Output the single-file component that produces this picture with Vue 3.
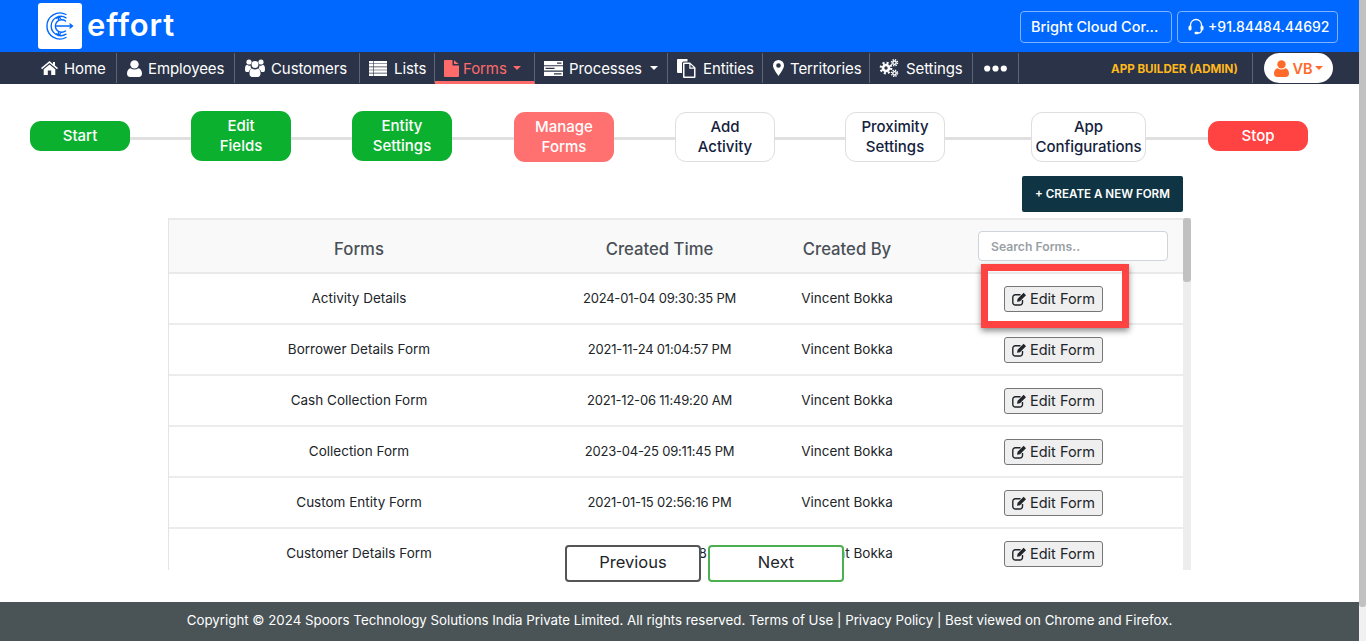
<script setup>
const navItems = [
  { label: 'Home', icon: 'home', width: 87, pad: 11, gap: 6 },
  { label: 'Employees', icon: 'user', width: 118, pad: 10, gap: 6 },
  { label: 'Customers', icon: 'users', width: 125, pad: 10, gap: 6 },
  { label: 'Lists', icon: 'list', width: 75, pad: 9, gap: 7 },
  { label: 'Forms', icon: 'file', width: 100, pad: 9, gap: 4, caret: true, active: true },
  { label: 'Processes', icon: 'server', width: 133, pad: 9, gap: 6, caret: true },
  { label: 'Entities', icon: 'files', width: 95, pad: 9, gap: 7 },
  { label: 'Territories', icon: 'marker', width: 107, pad: 10, gap: 6 },
  { label: 'Settings', icon: 'cogs', width: 103, pad: 9, gap: 7 },
  { label: '', icon: 'dots', width: 46, pad: 11, gap: 0 }
]

const steps = [
  { label: ['Start'], kind: 'green short', width: 100, gap: 61 },
  { label: ['Edit', 'Fields'], kind: 'green', width: 100, gap: 61 },
  { label: ['Entity', 'Settings'], kind: 'green', width: 100, gap: 62 },
  { label: ['Manage', 'Forms'], kind: 'coral low', width: 100, gap: 61 },
  { label: ['Add', 'Activity'], kind: 'plain low', width: 100, gap: 70 },
  { label: ['Proximity', 'Settings'], kind: 'plain low', width: 100, gap: 86 },
  { label: ['App', 'Configurations'], kind: 'plain low', width: 115, gap: 62 },
  { label: ['Stop'], kind: 'red short', width: 100, gap: 0 }
]

const rows = [
  ['Activity Details', '2024-01-04 09:30:35 PM', 'Vincent Bokka'],
  ['Borrower Details Form', '2021-11-24 01:04:57 PM', 'Vincent Bokka'],
  ['Cash Collection Form', '2021-12-06 11:49:20 AM', 'Vincent Bokka'],
  ['Collection Form', '2023-04-25 09:11:45 PM', 'Vincent Bokka'],
  ['Custom Entity Form', '2021-01-15 02:56:16 PM', 'Vincent Bokka'],
  ['Customer Details Form', '2021-11-18 10:22:08 AM', 'Vincent Bokka']
]
</script>

<template>
  <div class="page">
    <div class="main">
      <header class="top">
        <div class="brand">
          <div class="logo">
            <svg width="30" height="32" viewBox="0 0 30 32" fill="none" stroke="#0068ff" stroke-width="1.400" stroke-linecap="round">
              <path d="M21 4.500A13 13 0 1 0 21 27.500" />
              <path d="M21 7.800A9.700 9.700 0 1 0 21 24.200" />
              <path d="M20.500 11A6.300 6.300 0 1 0 20.500 21" />
              <path d="M11.500 16H27.500M25 14L27.500 16L25 18" />
              <path d="M13.500 6.800V10M11.500 8.300L13.500 6.500L15.500 8.300M13.500 25.200V22M11.500 23.700L13.500 25.500L15.500 23.700" />
            </svg>
          </div>
          <span class="wordmark">effort</span>
        </div>
        <div class="top-actions">
          <div class="outline-box company">Bright Cloud Cor...</div>
          <div class="outline-box phone">
            <svg width="16" height="17" viewBox="0 0 16 17" fill="none" stroke="#fff" stroke-width="1.300">
              <path d="M2.500 9V7a5.500 5.500 0 0 1 11 0V9" />
              <rect x="0.500" y="7.500" width="3" height="5" rx="1.500" fill="#fff" stroke="none" />
              <rect x="12.500" y="7.500" width="3" height="5" rx="1.500" fill="#fff" stroke="none" />
              <path d="M13.500 12c0 1.800-1.400 3-3.500 3" />
              <rect x="6.500" y="13.800" width="4" height="2.400" rx="1.200" fill="#fff" stroke="none" />
            </svg>
            <span>+91.84484.44692</span>
          </div>
        </div>
      </header>

      <nav class="nav">
        <div class="nav-items">
          <div
            v-for="item in navItems"
            :key="item.icon"
            class="nav-item"
            :class="{ active: item.active }"
            :style="{ width: item.width + 'px', paddingLeft: item.pad + 'px', gap: item.gap + 'px' }"
          >
            <svg v-if="item.icon === 'home'" class="ico" width="17" height="14" viewBox="0 0 17 14" fill="currentColor">
              <path d="M8.500 0L0 7l1 1.200L8.500 2l7.500 6.200L17 7l-3-2.500V1h-2v1.900z" />
              <path d="M8.500 3.400L2.700 8.200V14h4.100V9.600h3.400V14h4.100V8.200z" />
            </svg>
            <svg v-else-if="item.icon === 'user'" class="ico" width="15" height="17" viewBox="0 0 15 17" fill="currentColor">
              <circle cx="7.500" cy="4.400" r="4.200" />
              <path d="M0 13.500C0 10.600 1.500 8.600 3.600 8.200c2.300 1.600 5.500 1.600 7.800 0 2.100.4 3.600 2.400 3.600 5.300 0 2.200-1.300 3.500-3.200 3.500H3.200C1.300 17 0 15.700 0 13.500z" />
            </svg>
            <svg v-else-if="item.icon === 'users'" class="ico" width="20" height="18" viewBox="0 0 20 18" fill="currentColor">
              <circle cx="4" cy="3" r="2.600" />
              <circle cx="16" cy="3" r="2.600" />
              <circle cx="10" cy="5.500" r="3.400" />
              <path d="M0 10c0-2.500.8-4 2-4.200 1.200 1 2.700 1 3.600.6a5 5 0 0 0 .9 3.200A6 6 0 0 0 3.600 13H1.400C.5 13 0 12 0 10z" />
              <path d="M20 10c0-2.500-.8-4-2-4.200-1.200 1-2.700 1-3.600.6a5 5 0 0 1-.9 3.200A6 6 0 0 1 16.400 13h2.200C19.500 13 20 12 20 10z" />
              <path d="M4.500 14.500C4.500 11.500 5.500 10 7 9.600c1.800 1.200 4.200 1.200 6 0 1.500.4 2.500 1.900 2.500 4.900 0 2-1.100 3.500-2.700 3.500H7.200C5.600 18 4.500 16.500 4.500 14.500z" />
            </svg>
            <svg v-else-if="item.icon === 'list'" class="ico" width="18" height="15" viewBox="0 0 18 15" fill="currentColor">
              <path d="M0 0h18v2.500H0zM0 3.100h18v2.500H0zM0 6.200h18v2.500H0zM0 9.300h18v2.500H0zM0 12.400h18V15H0z" />
              <path d="M4.200 0h.6v15h-.6z" fill="#2a3347" />
            </svg>
            <svg v-else-if="item.icon === 'file'" class="ico" width="15" height="17" viewBox="0 0 15 17" fill="currentColor">
              <path d="M0 1a1 1 0 0 1 1-1h7.500v5.500H15V16a1 1 0 0 1-1 1H1a1 1 0 0 1-1-1zM10 .3L14.700 4H10z" />
            </svg>
            <svg v-else-if="item.icon === 'server'" class="ico" width="19" height="15" viewBox="0 0 19 15" fill="currentColor">
              <path fill-rule="evenodd" d="M0 0h19v4.300H0zM13 1.500v1.300h4.500V1.500zM0 5.300h19v4.300H0zM1.500 6.800v1.300h9V6.800zM0 10.700h19V15H0zM10 12.200v1.300h7.500v-1.300z" />
            </svg>
            <svg v-else-if="item.icon === 'files'" class="ico" width="19" height="19" viewBox="0 0 19 19" fill="currentColor">
              <path d="M0 1a1 1 0 0 1 1-1h9.500v2.500H6.700A1.700 1.700 0 0 0 5 4.200V14H1a1 1 0 0 1-1-1z" />
              <path fill-rule="evenodd" d="M6 4.500a1 1 0 0 1 1-1h6l5.500 5V18a1 1 0 0 1-1 1H7a1 1 0 0 1-1-1zM7.500 5v12.500h9.500V9.800h-4.700V5zM13.500 5.600v3h3.200z" />
            </svg>
            <svg v-else-if="item.icon === 'marker'" class="ico" width="11" height="16" viewBox="0 0 11 16" fill="currentColor">
              <path fill-rule="evenodd" d="M5.500 0A5.500 5.500 0 0 1 11 5.500C11 8.500 7.500 13 5.500 16 3.500 13 0 8.500 0 5.500A5.500 5.500 0 0 1 5.500 0zM5.500 3.200a2.300 2.300 0 1 0 0 4.600 2.300 2.300 0 0 0 0-4.600z" />
            </svg>
            <svg v-else-if="item.icon === 'cogs'" class="ico" width="20" height="18" viewBox="0 0 20 18" fill="none" stroke="currentColor">
              <circle cx="7" cy="9" r="3" stroke-width="2.600" />
              <circle cx="7" cy="9" r="5.200" stroke-width="2.400" stroke-dasharray="2 2.080" />
              <circle cx="15.500" cy="3.700" r="1.700" stroke-width="1.400" />
              <circle cx="15.500" cy="3.700" r="3" stroke-width="1.500" stroke-dasharray="1.300 1.060" />
              <circle cx="15.500" cy="14.300" r="1.700" stroke-width="1.400" />
              <circle cx="15.500" cy="14.300" r="3" stroke-width="1.500" stroke-dasharray="1.300 1.060" />
            </svg>
            <svg v-else class="ico" width="23" height="7" viewBox="0 0 23 7" fill="currentColor">
              <circle cx="3.200" cy="3.500" r="3.100" />
              <circle cx="11.500" cy="3.500" r="3.100" />
              <circle cx="19.800" cy="3.500" r="3.100" />
            </svg>
            <span v-if="item.label" class="nav-label">{{ item.label }}</span>
            <i v-if="item.caret" class="caret"></i>
          </div>
        </div>
        <div class="nav-right">
          <div class="builder">APP BUILDER (ADMIN)</div>
          <div class="user-pill">
            <svg width="15" height="17" viewBox="0 0 15 17" fill="currentColor">
              <circle cx="7.500" cy="4.400" r="4.200" />
              <path d="M0 13.500C0 10.600 1.500 8.600 3.600 8.200c2.300 1.600 5.500 1.600 7.800 0 2.100.4 3.600 2.400 3.600 5.300 0 2.200-1.300 3.500-3.200 3.500H3.200C1.300 17 0 15.700 0 13.500z" />
            </svg>
            <span>VB</span>
            <i class="caret"></i>
          </div>
        </div>
      </nav>

      <section class="workflow">
        <template v-for="step in steps" :key="step.label.join()">
          <div class="step" :class="step.kind" :style="{ width: step.width + 'px' }">
            <span v-for="line in step.label" :key="line">{{ line }}</span>
          </div>
          <div v-if="step.gap" class="connector" :style="{ width: step.gap + 'px' }"></div>
        </template>
      </section>

      <div class="create-row">
        <button class="create">+ CREATE A NEW FORM</button>
      </div>

      <section class="table-wrap">
        <div class="table">
          <div class="row head">
            <div class="head-cell">Forms</div>
            <div class="head-cell">Created Time</div>
            <div class="head-cell">Created By</div>
            <div class="search-cell"><input class="search" placeholder="Search Forms.." /></div>
          </div>
          <div v-for="row in rows" :key="row[0]" class="row">
            <div class="cell">{{ row[0] }}</div>
            <div class="cell date">{{ row[1] }}</div>
            <div class="cell">{{ row[2] }}</div>
            <div>
              <button class="edit">
                <svg width="15" height="14" viewBox="0 0 15 14" fill="none" stroke="currentColor" stroke-width="1.400">
                  <path d="M10.500 8V10.500a2.500 2.500 0 0 1-2.500 2.500H3.300a2.500 2.500 0 0 1-2.500-2.500V5.300a2.500 2.500 0 0 1 2.500-2.500H8.500" />
                  <path d="M5 9.700L5.600 6.800 11.600.8 14 3.200 8 9.200z" fill="currentColor" stroke="none" />
                </svg>
                <span>Edit Form</span>
              </button>
            </div>
          </div>
        </div>
        <div class="table-scroll"><div class="table-thumb"></div></div>
        <div class="highlight"></div>
      </section>

      <div class="pager">
        <button class="prev">Previous</button>
        <button class="next">Next</button>
      </div>

      <footer class="footer">
        Copyright © 2024 Spoors Technology Solutions India Private Limited. All rights reserved. Terms of Use | Privacy Policy | Best viewed on Chrome and Firefox.
      </footer>
    </div>
    <div class="page-scroll"><div class="page-thumb"></div></div>
  </div>
</template>

<style scoped>
.page {
  display: flex;
  width: 1366px;
  height: 641px;
  overflow: hidden;
  background: #fff;
  font-family: Inter, "Noto Sans", sans-serif;
  color: #212529;
}
.main {
  position: relative;
  width: 1359px;
  display: flex;
  flex-direction: column;
}
.page-scroll {
  width: 7px;
  background: #f1f1f1;
}
.page-thumb {
  height: 607px;
  background: #c1c1c1;
  border-radius: 0 0 3px 3px;
}
.top {
  height: 52px;
  flex: none;
  background: #0068ff;
  display: flex;
  justify-content: space-between;
  align-items: flex-start;
  padding: 0 21px 0 38px;
  box-sizing: border-box;
}
.brand {
  display: flex;
  align-items: center;
  gap: 5px;
  padding-top: 3px;
}
.logo {
  width: 44px;
  height: 46px;
  background: #fff;
  border-radius: 3px;
  display: flex;
  align-items: center;
  justify-content: center;
}
.wordmark {
  color: #fff;
  font-size: 31px;
  font-weight: 600;
  letter-spacing: 0.8px;
  line-height: 40px;
  margin-top: -3px;
}
.top-actions {
  display: flex;
  gap: 5px;
  padding-top: 11px;
}
.outline-box {
  height: 32px;
  box-sizing: border-box;
  border: 1px solid #7fb2ff;
  border-radius: 4px;
  color: #fff;
  font-size: 14.500px;
  font-weight: 500;
  line-height: 28px;
  padding-bottom: 1px;
  display: flex;
  align-items: center;
  white-space: nowrap;
}
.company {
  width: 152px;
  padding-left: 10px;
}
.phone {
  width: 161px;
  padding-left: 10px;
  gap: 4px;
  font-size: 14px;
}
.nav {
  height: 32px;
  flex: none;
  background: #2a3347;
  display: flex;
  justify-content: space-between;
  padding-left: 30px;
  padding-right: 26px;
  color: #fff;
}
.nav-items {
  display: flex;
  padding-top: 1px;
}
.nav-item {
  box-sizing: border-box;
  height: 30px;
  display: flex;
  align-items: center;
  font-size: 15px;
  letter-spacing: -0.1px;
  color: #fff;
  border-right: 1px solid #5d6474;
  white-space: nowrap;
}
.nav-item.active {
  color: #ff6b6b;
  height: 31px;
  border-bottom: 3px solid #ff6b6b;
  padding-top: 2px;
}
.ico {
  flex: none;
}
.caret {
  display: inline-block;
  width: 0;
  height: 0;
  margin-left: 2px;
  border-left: 4px solid transparent;
  border-right: 4px solid transparent;
  border-top: 4px solid currentColor;
}
.nav-right {
  display: flex;
  align-items: center;
}
.builder {
  width: 142px;
  height: 30px;
  box-sizing: border-box;
  border-right: 1px solid #5d6474;
  color: #ffb81c;
  font-size: 11.600px;
  font-weight: 700;
  line-height: 32px;
  white-space: nowrap;
}
.user-pill {
  margin-left: 11px;
  width: 69px;
  height: 30px;
  box-sizing: border-box;
  background: #fff;
  border-radius: 15px;
  color: #ff6a2b;
  display: flex;
  align-items: center;
  justify-content: center;
  gap: 3px;
  font-size: 14.500px;
  font-weight: 600;
}
.user-pill .caret {
  margin-left: -1px;
}
.workflow {
  display: flex;
  align-items: flex-start;
  padding: 27px 0 0 30px;
  height: 61px;
  flex: none;
}
.step {
  box-sizing: border-box;
  height: 50px;
  flex: none;
  border-radius: 11px;
  display: flex;
  flex-direction: column;
  align-items: center;
  justify-content: center;
  font-size: 15px;
  font-weight: 500;
  line-height: 20px;
  white-space: nowrap;
}
.step.short {
  height: 30px;
  margin-top: 10px;
}
.step.low {
  margin-top: 1px;
}
.green {
  background: #0cb02f;
  color: #fff;
}
.coral {
  background: #ff7070;
  color: #fff;
}
.red {
  background: #ff4343;
  color: #fff;
}
.plain {
  background: #fff;
  border: 1px solid #dedede;
  color: #14213d;
}
.connector {
  flex: none;
  height: 3px;
  margin-top: 26px;
  background: #e0e0e0;
}
.create-row {
  display: flex;
  justify-content: flex-end;
  padding-top: 4px;
  padding-right: 176px;
  flex: none;
}
.create {
  width: 161px;
  height: 36px;
  padding: 0;
  border: none;
  border-radius: 2px;
  background: #0f3443;
  color: #fff;
  font-family: inherit;
  font-size: 11.600px;
  font-weight: 600;
}
.table-wrap {
  position: relative;
  margin: 6px 0 0 168px;
  width: 1023px;
  height: 352px;
  flex: none;
  display: flex;
  overflow: hidden;
}
.table {
  width: 1015px;
  box-sizing: border-box;
  border-top: 2px solid #e9e9e9;
  border-left: 1px solid #e4e4e4;
}
.row {
  display: grid;
  grid-template-columns: 380px 221px 154px 259px;
  height: 51px;
  box-sizing: border-box;
  border-bottom: 2px solid #ececec;
  align-items: center;
  text-align: center;
  font-size: 13.500px;
  color: #212529;
}
.cell {
  padding-bottom: 2px;
}
.date {
  font-size: 13px;
  letter-spacing: -0.2px;
}
.head {
  height: 54px;
  background: #f9f9f9;
  font-size: 16.700px;
  color: #495057;
  font-weight: 500;
  border-bottom-color: #e9e9e9;
}
.head-cell {
  padding-top: 5px;
}
.search-cell {
  padding: 0 15px 0 54px;
}
.search {
  display: block;
  box-sizing: border-box;
  width: 190px;
  height: 30px;
  padding: 0 12px;
  border: 1px solid #ced4da;
  border-radius: 4px;
  background: #fff;
  font-family: inherit;
  font-size: 12.200px;
  font-weight: 600;
}
.search::placeholder {
  color: #9a9fa5;
}
.edit {
  width: 99px;
  height: 26px;
  padding: 0;
  display: inline-flex;
  align-items: center;
  justify-content: center;
  gap: 3px;
  box-sizing: border-box;
  background: #efefef;
  border: 1px solid #767676;
  border-radius: 3px;
  color: #212529;
  font-family: inherit;
  font-size: 14.500px;
}
.table-scroll {
  width: 8px;
  background: #ededed;
}
.table-thumb {
  height: 64px;
  background: #c1c1c1;
  border-radius: 3px;
}
.highlight {
  position: absolute;
  left: 813px;
  top: 46px;
  width: 148px;
  height: 64px;
  box-sizing: border-box;
  border: 7px solid #ff4343;
  box-shadow: 0 3px 6px rgba(0, 0, 0, 0.45);
}
.pager {
  position: absolute;
  left: 565px;
  top: 545px;
  display: flex;
  gap: 7px;
}
.prev,
.next {
  width: 136px;
  height: 37px;
  box-sizing: border-box;
  background: #fff;
  border-radius: 4px;
  color: #212529;
  font-family: inherit;
  font-size: 16.500px;
  padding: 0 0 3px;
}
.prev {
  border: 2px solid #555;
}
.next {
  border: 2px solid #4caf50;
}
.footer {
  margin-top: 32px;
  height: 39px;
  flex: none;
  background: #4a5457;
  color: #fff;
  font-size: 13.300px;
  line-height: 37px;
  text-align: center;
  white-space: nowrap;
}
</style>
